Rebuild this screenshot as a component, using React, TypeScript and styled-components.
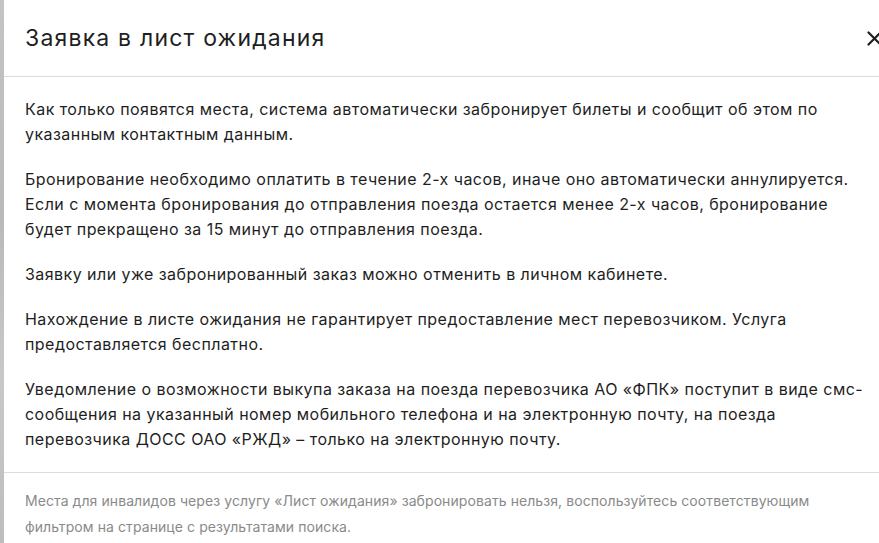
import React from "react";
import styled, { createGlobalStyle } from "styled-components";

const Global = createGlobalStyle`
  html, body { margin: 0; padding: 0; background: #fff; overflow: hidden; }
  body { font-family: Inter, "Noto Sans", sans-serif; }
`;

const Page = styled.div`
  display: flex;
  width: 879px;
  height: 543px;
  overflow: hidden;
  background: linear-gradient(180deg, #c4c4c4 0%, #b9b9b9 40%, #c8c8c8 70%, #bdbdbd 100%);
`;

const Modal = styled.div`
  margin-left: 4px;
  width: 902px;
  flex-shrink: 0;
  background: #fff;
  display: flex;
  flex-direction: column;
`;

const Header = styled.div`
  height: 76px;
  border-bottom: 1px solid #dcdcdc;
  display: flex;
  align-items: center;
  justify-content: space-between;
  padding: 0 24px 0 21px;
  box-sizing: content-box;
`;

const Title = styled.h2`
  margin: 0;
  font-size: 23px;
  font-weight: 400;
  letter-spacing: 1.2px;
  color: #1f1f1f;
`;

const Close = styled.button`
  border: none;
  background: none;
  padding: 0;
  width: 16px;
  height: 16px;
  display: flex;
  align-items: center;
  justify-content: center;
  cursor: pointer;
`;

const Body = styled.div`
  padding: 20px 24px 20px 21px;
  border-bottom: 1px solid #dcdcdc;
  display: flex;
  flex-direction: column;
  gap: 20px;
`;

const Para = styled.p`
  margin: 0;
  font-size: 16px;
  line-height: 25px;
  letter-spacing: 0.45px;
  color: #1e1e1e;
  white-space: nowrap;
`;

const Footer = styled.div`
  padding: 15px 24px 0 21px;
`;

const Note = styled.p`
  margin: 0;
  font-size: 14px;
  line-height: 26px;
  letter-spacing: 0.08px;
  color: #8a8a8a;
  white-space: nowrap;
`;

export default function App() {
  return (
    <>
      <Global />
      <Page>
        <Modal>
          <Header>
            <Title>Заявка в лист ожидания</Title>
            <Close aria-label="Закрыть">
              <svg width="15" height="15" viewBox="0 0 15 15">
                <path d="M1.5 1.5 L13.5 13.5 M13.5 1.5 L1.5 13.5" stroke="#1f1f1f" strokeWidth="2.2" strokeLinecap="round" />
              </svg>
            </Close>
          </Header>
          <Body>
            <Para>
              Как только появятся места, система автоматически забронирует билеты и сообщит об этом по
              <br />
              указанным контактным данным.
            </Para>
            <Para>
              Бронирование необходимо оплатить в течение 2-х часов, иначе оно автоматически аннулируется.
              <br />
              Если с момента бронирования до отправления поезда остается менее 2-х часов, бронирование
              <br />
              будет прекращено за 15 минут до отправления поезда.
            </Para>
            <Para>Заявку или уже забронированный заказ можно отменить в личном кабинете.</Para>
            <Para>
              Нахождение в листе ожидания не гарантирует предоставление мест перевозчиком. Услуга
              <br />
              предоставляется бесплатно.
            </Para>
            <Para>
              Уведомление о возможности выкупа заказа на поезда перевозчика АО «ФПК» поступит в виде смс-
              <br />
              сообщения на указанный номер мобильного телефона и на электронную почту, на поезда
              <br />
              перевозчика ДОСС ОАО «РЖД» – только на электронную почту.
            </Para>
          </Body>
          <Footer>
            <Note>
              Места для инвалидов через услугу «Лист ожидания» забронировать нельзя, воспользуйтесь соответствующим
              <br />
              фильтром на странице с результатами поиска.
            </Note>
          </Footer>
        </Modal>
      </Page>
    </>
  );
}
